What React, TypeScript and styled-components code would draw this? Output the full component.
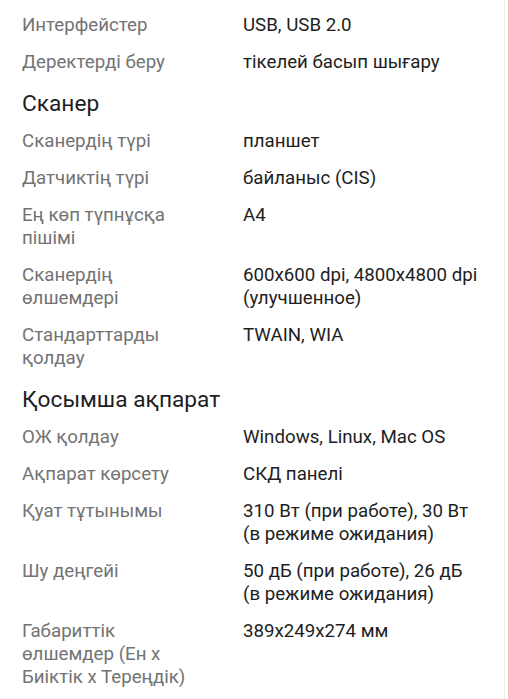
import styled, { createGlobalStyle } from 'styled-components';

const GlobalStyle = createGlobalStyle`
  body {
    margin: 0;
    background-color: white;
    font-family: Roboto, 'Noto Sans', sans-serif;
  }
`;

const Page = styled.div`
  width: 505px;
  min-height: 699px;
  box-sizing: border-box;
  padding: 7px 22px 0 22px;
  border-right: 1px solid #ececec;
  background-color: white;
`;

const SectionTitle = styled.h2`
  margin: 0;
  padding: 9px 0 5px 0;
  font-size: 22.7px;
  line-height: 28px;
  font-weight: 400;
  color: #1e1e1e;
`;

const Row = styled.div`
  display: grid;
  grid-template-columns: 170px 1fr;
  column-gap: 51px;
  padding: 7px 0;
  font-size: 18.7px;
  line-height: 23px;
`;

const Label = styled.span`
  color: #737373;
`;

const Value = styled.span`
  color: #1e1e1e;
`;

type Item = { label: string; value: string };
type Block = { title?: string; items: Item[] };

const blocks: Block[] = [
  {
    items: [
      { label: 'Интерфейстер', value: 'USB, USB 2.0' },
      { label: 'Деректерді беру', value: 'тікелей басып шығару' },
    ],
  },
  {
    title: 'Сканер',
    items: [
      { label: 'Сканердің түрі', value: 'планшет' },
      { label: 'Датчиктің түрі', value: 'байланыс (CIS)' },
      { label: 'Ең көп түпнұсқа пішімі', value: 'A4' },
      {
        label: 'Сканердің өлшемдері',
        value: '600x600 dpi, 4800x4800 dpi (улучшенное)',
      },
      { label: 'Стандарттарды қолдау', value: 'TWAIN, WIA' },
    ],
  },
  {
    title: 'Қосымша ақпарат',
    items: [
      { label: 'ОЖ қолдау', value: 'Windows, Linux, Mac OS' },
      { label: 'Ақпарат көрсету', value: 'СКД панелі' },
      {
        label: 'Қуат тұтынымы',
        value: '310 Вт (при работе), 30 Вт (в режиме ожидания)',
      },
      {
        label: 'Шу деңгейі',
        value: '50 дБ (при работе), 26 дБ (в режиме ожидания)',
      },
      {
        label: 'Габариттік өлшемдер (Ен х Биіктік х Тереңдік)',
        value: '389x249x274 мм',
      },
    ],
  },
];

function App() {
  return (
    <>
      <GlobalStyle />
      <Page>
        {blocks.map((b, i) => (
          <section key={i}>
            {b.title && <SectionTitle>{b.title}</SectionTitle>}
            {b.items.map((it) => (
              <Row key={it.label}>
                <Label>{it.label}</Label>
                <Value>{it.value}</Value>
              </Row>
            ))}
          </section>
        ))}
      </Page>
    </>
  );
}

export default App;
